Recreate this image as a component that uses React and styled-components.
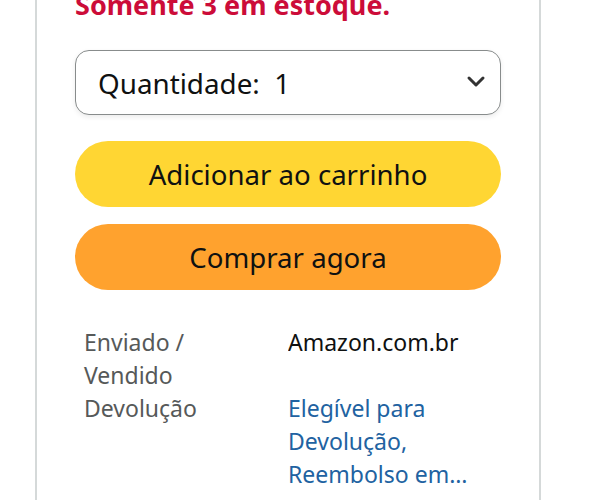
import React from "react";
import styled, { createGlobalStyle } from "styled-components";

const Global = createGlobalStyle`
  html, body { margin: 0; padding: 0; background: #ffffff; }
  body { font-family: "Noto Sans", "Open Sans", Arial, sans-serif; color: #0F1111; }
`;

const Page = styled.div`
  padding-left: 35px;
  height: 500px;
  overflow: hidden;
`;

const Card = styled.div`
  box-sizing: border-box;
  width: 506px;
  margin-top: -13px;
  border-left: 2px solid #D5D9D9;
  border-right: 2px solid #D5D9D9;
  padding: 0 38px 40px 38px;
  display: flex;
  flex-direction: column;
`;

const Stock = styled.div`
  color: #CC0C39;
  font-weight: 700;
  font-size: 27px;
  line-height: 35px;
  white-space: nowrap;
`;

const Select = styled.div`
  box-sizing: border-box;
  margin-top: 28px;
  height: 65px;
  border: 1.5px solid #888C8C;
  border-radius: 14px;
  background: #ffffff;
  box-shadow: 0 2px 5px rgba(15, 17, 17, 0.08);
  display: flex;
  align-items: center;
  justify-content: space-between;
  padding: 0 14px 0 22px;
  font-size: 27.8px;
  color: #0F1111;
  white-space: pre;
`;

const Chevron = styled.svg`
  width: 20px;
  height: 14px;
  display: block;
  margin-top: -4px;
`;

const Button = styled.div`
  box-sizing: border-box;
  height: 66px;
  margin-top: ${(p) => p.$gap}px;
  border-radius: 33px;
  background: ${(p) => p.$bg};
  display: flex;
  align-items: center;
  justify-content: center;
  font-size: 27.6px;
  color: #0F1111;
  white-space: nowrap;
`;

const Table = styled.div`
  margin-top: 36px;
  margin-left: 9px;
  display: grid;
  grid-template-columns: 170px 1fr;
  column-gap: 34px;
  font-size: 23px;
  line-height: 33px;
`;

const Label = styled.div`
  color: #565959;
`;

const Value = styled.div`
  color: ${(p) => (p.$link ? "#2162A1" : "#0F1111")};
  display: -webkit-box;
  -webkit-box-orient: vertical;
  -webkit-line-clamp: 3;
  overflow: hidden;
`;

export default function App() {
  return (
    <>
      <Global />
      <Page>
        <Card>
          <Stock>Somente 3 em estoque.</Stock>
          <Select>
            <span>{"Quantidade:  1"}</span>
            <Chevron viewBox="0 0 20 14">
              <polyline
                points="3,4 10,11 17,4"
                fill="none"
                stroke="#333"
                strokeWidth="3"
                strokeLinecap="round"
                strokeLinejoin="round"
              />
            </Chevron>
          </Select>
          <Button $bg="#FFD633" $gap={26}>Adicionar ao carrinho</Button>
          <Button $bg="#FFA22E" $gap={17}>Comprar agora</Button>
          <Table>
            <Label>Enviado / Vendido</Label>
            <Value>Amazon.com.br</Value>
            <Label>Devolução</Label>
            <Value $link>
              Elegível para Devolução, Reembolso em Reais ou Substituição
              dentro de 7 dias a partir do recebimento
            </Value>
          </Table>
        </Card>
      </Page>
    </>
  );
}
